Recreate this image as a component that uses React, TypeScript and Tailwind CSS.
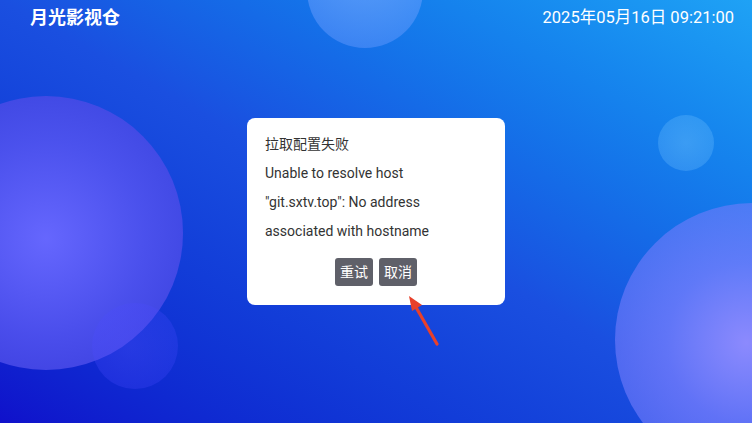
import React from 'react';

const cjk = "font-['Roboto','Noto_Sans_CJK_SC',sans-serif]";

// Soft translucent bubbles floating over the backdrop
const Bubbles: React.FC = () => (
  <>
    <div className="absolute left-[-91px] top-[96px] w-[274px] h-[274px] rounded-full bg-[radial-gradient(circle_at_50%_52%,rgba(104,104,255,0.97)_0%,rgba(84,84,240,0.85)_50%,rgba(62,62,218,0.8)_100%)]" />
    <div className="absolute left-[92px] top-[303px] w-[86px] h-[86px] rounded-full bg-[radial-gradient(circle_at_45%_50%,rgba(80,80,255,0.35),rgba(70,70,255,0.22))]" />
    <div className="absolute left-[307px] top-[-68px] w-[116px] h-[116px] rounded-full bg-[radial-gradient(circle_at_50%_25%,rgba(120,170,255,0.7),rgba(100,150,255,0.4))]" />
    <div className="absolute left-[658px] top-[115px] w-[56px] h-[56px] rounded-full bg-[radial-gradient(circle_at_50%_50%,rgba(120,200,255,0.38),rgba(110,190,255,0.25))]" />
    <div className="absolute left-[615px] top-[203px] w-[274px] h-[274px] rounded-full bg-[radial-gradient(circle_at_48%_51%,rgba(146,140,255,0.95)_0%,rgba(124,128,255,0.72)_40%,rgba(100,116,245,0.45)_100%)]" />
  </>
);

const Pointer: React.FC = () => (
  <svg className="absolute left-[400px] top-[290px]" width="44" height="60" viewBox="0 0 44 60">
    <line x1="37" y1="54" x2="13" y2="12" stroke="#e8402a" strokeWidth="3.2" strokeLinecap="round" />
    <polygon points="9,6 22,15 12,21" fill="#e8402a" />
  </svg>
);

export default function App() {
  return (
    <div className={`relative w-[752px] h-[423px] overflow-hidden bg-linear-to-tr from-[#1010cb] via-[#1a4fe0] to-[#1fa2f5] ${cjk}`}>
      <Bubbles />

      <header className="relative flex items-start justify-between pl-[30px] pr-[18px] pt-[5px]">
        <h1 className="text-[18px] leading-[26px] font-bold text-white">月光影视仓</h1>
        <span className="text-[16.5px] leading-[26px] text-white">2025年05月16日 09:21:00</span>
      </header>

      <div className="absolute inset-0 flex items-center justify-center">
        <div className="w-[258px] rounded-[8px] bg-white px-[18px] pt-[12px] pb-[19px] text-[#333333]">
          <p className="text-[14px] leading-[29px]">拉取配置失败</p>
          <p className="text-[14px] leading-[29px]">Unable to resolve host</p>
          <p className="text-[14px] leading-[29px]">"git.sxtv.top": No address</p>
          <p className="text-[14px] leading-[29px]">associated with hostname</p>
          <div className="mt-[12px] flex justify-center gap-[6px]">
            <button className="h-[28px] px-[5px] rounded-[3px] bg-[#5f6069] text-[14px] text-white">重试</button>
            <button className="h-[28px] px-[5px] rounded-[3px] bg-[#5f6069] text-[14px] text-white">取消</button>
          </div>
        </div>
      </div>

      <Pointer />
    </div>
  );
}
